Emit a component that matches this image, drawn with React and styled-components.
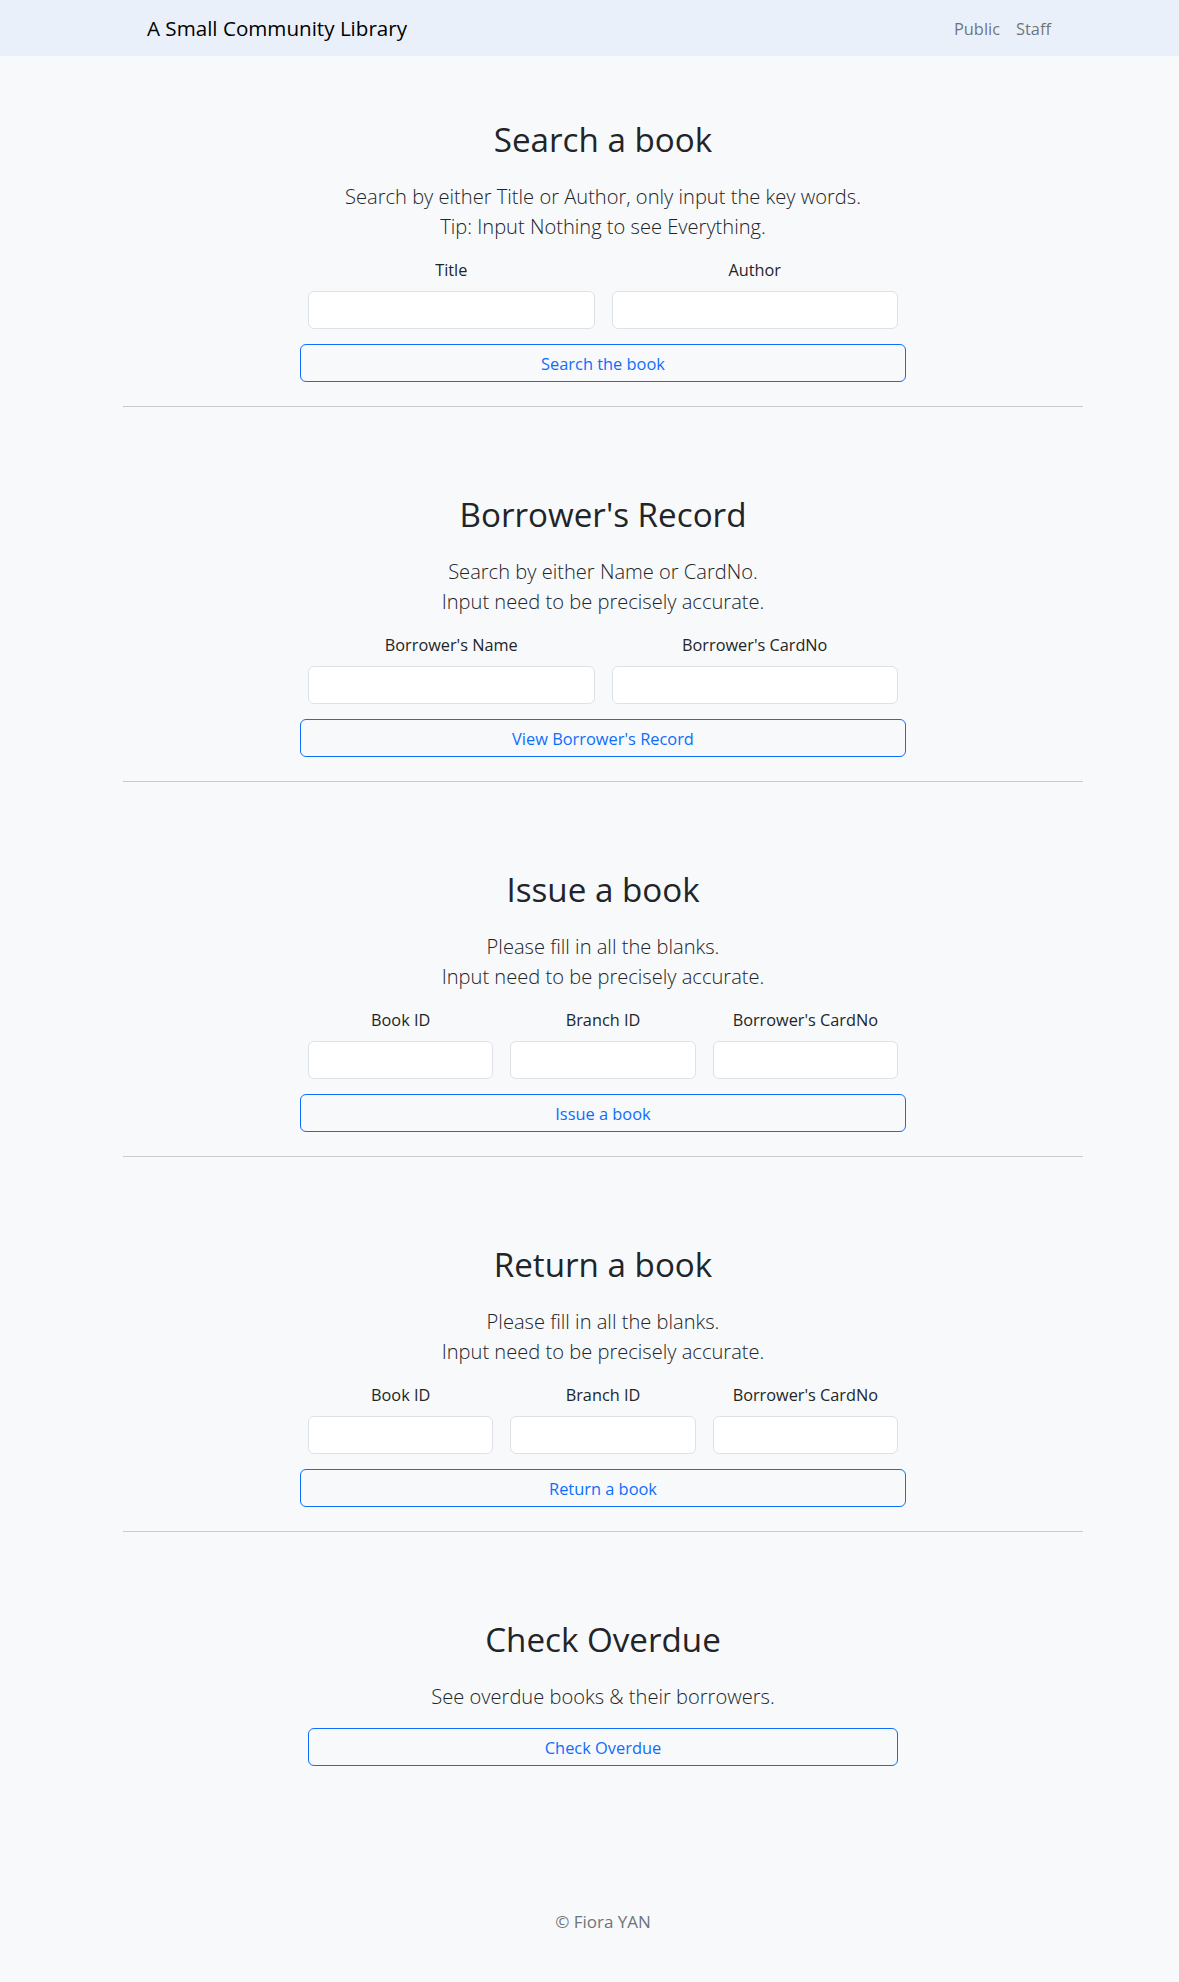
import React from "react";
import styled, { createGlobalStyle } from "styled-components";

const GlobalStyle = createGlobalStyle`
  html, body {
    margin: 0;
    padding: 0;
    background: #f8f9fa;
    color: #212529;
    font-family: "Open Sans", "Noto Sans", "Liberation Sans", sans-serif;
  }
  * { box-sizing: border-box; }
`;

const NavBar = styled.nav`
  height: 56px;
  background: #e9f0fa;
  padding-left: 27px;
`;

const NavInner = styled.div`
  width: 960px;
  height: 100%;
  margin: 0 auto;
  padding: 0 24px;
  display: flex;
  align-items: center;
  justify-content: space-between;
`;

const Brand = styled.a`
  font-size: 20.6px;
  color: #000;
  text-decoration: none;
`;

const NavLinks = styled.div`
  display: flex;
`;

const NavLink = styled.a`
  padding: 8px 8px;
  font-size: 16.4px;
  color: rgba(0, 0, 0, 0.55);
  text-decoration: none;
`;

const Page = styled.main`
  padding-left: 27px;
`;

const Container = styled.div`
  width: 960px;
  margin: 0 auto;
  text-align: center;
`;

const Section = styled.section`
  padding-top: 63px;
`;

const Title = styled.h2`
  font-size: 33.2px;
  line-height: 41px;
  font-weight: 400;
  margin: 0 0 22px;
  color: #212529;
`;

const Lead = styled.p`
  font-size: 20.1px;
  line-height: 30px;
  font-weight: 300;
  margin: 0 0 16px;
  color: #212529;
`;

const Form = styled.form`
  width: ${(p) => p.$width}px;
  margin: 0 auto;
`;

const Row = styled.div`
  display: grid;
  grid-template-columns: repeat(${(p) => p.$cols}, 1fr);
  column-gap: 17px;
  padding: 0 8px;
`;

const Field = styled.div`
  display: flex;
  flex-direction: column;
`;

const Label = styled.label`
  font-size: 16.3px;
  line-height: 24px;
  margin-bottom: 9px;
  color: #212529;
`;

const Input = styled.input`
  height: 38px;
  width: 100%;
  background: #fff;
  border: 1px solid #dee2e6;
  border-radius: 6px;
  padding: 6px 12px;
  font-size: 16px;
  font-family: inherit;
`;

const OutlineButton = styled.button`
  display: block;
  width: 100%;
  height: 38px;
  margin-top: ${(p) => (p.$flush ? 0 : 15)}px;
  background: transparent;
  border: 1px solid #0d6efd;
  border-radius: 6px;
  color: #0d6efd;
  font-size: 16.4px;
  font-family: inherit;
  cursor: pointer;
`;

const Divider = styled.hr`
  margin: 24px 0;
  border: 0;
  border-top: 1px solid #c9cacb;
`;

const Footer = styled.footer`
  margin-top: 144px;
  padding-bottom: 48px;
  text-align: center;
  font-size: 17px;
  line-height: 24px;
  color: #6c757d;
`;

const sections = [
  {
    title: "Search a book",
    lead: ["Search by either Title or Author, only input the key words.", "Tip: Input Nothing to see Everything."],
    fields: ["Title", "Author"],
    button: "Search the book",
  },
  {
    title: "Borrower's Record",
    lead: ["Search by either Name or CardNo.", "Input need to be precisely accurate."],
    fields: ["Borrower's Name", "Borrower's CardNo"],
    button: "View Borrower's Record",
  },
  {
    title: "Issue a book",
    lead: ["Please fill in all the blanks.", "Input need to be precisely accurate."],
    fields: ["Book ID", "Branch ID", "Borrower's CardNo"],
    button: "Issue a book",
  },
  {
    title: "Return a book",
    lead: ["Please fill in all the blanks.", "Input need to be precisely accurate."],
    fields: ["Book ID", "Branch ID", "Borrower's CardNo"],
    button: "Return a book",
  },
];

export default function App() {
  return (
    <>
      <GlobalStyle />
      <NavBar>
        <NavInner>
          <Brand href="#">A Small Community Library</Brand>
          <NavLinks>
            <NavLink href="#">Public</NavLink>
            <NavLink href="#">Staff</NavLink>
          </NavLinks>
        </NavInner>
      </NavBar>
      <Page>
        <Container>
          {sections.map((s) => (
            <React.Fragment key={s.title}>
              <Section>
                <Title>{s.title}</Title>
                <Lead>
                  {s.lead[0]}
                  <br />
                  {s.lead[1]}
                </Lead>
                <Form $width={606} onSubmit={(e) => e.preventDefault()}>
                  <Row $cols={s.fields.length}>
                    {s.fields.map((f) => (
                      <Field key={f}>
                        <Label>{f}</Label>
                        <Input type="text" />
                      </Field>
                    ))}
                  </Row>
                  <OutlineButton type="submit">{s.button}</OutlineButton>
                </Form>
              </Section>
              <Divider />
            </React.Fragment>
          ))}
          <Section>
            <Title>Check Overdue</Title>
            <Lead>See overdue books &amp; their borrowers.</Lead>
            <Form $width={590} onSubmit={(e) => e.preventDefault()}>
              <OutlineButton type="submit" $flush>
                Check Overdue
              </OutlineButton>
            </Form>
          </Section>
          <Footer>© Fiora YAN</Footer>
        </Container>
      </Page>
    </>
  );
}
